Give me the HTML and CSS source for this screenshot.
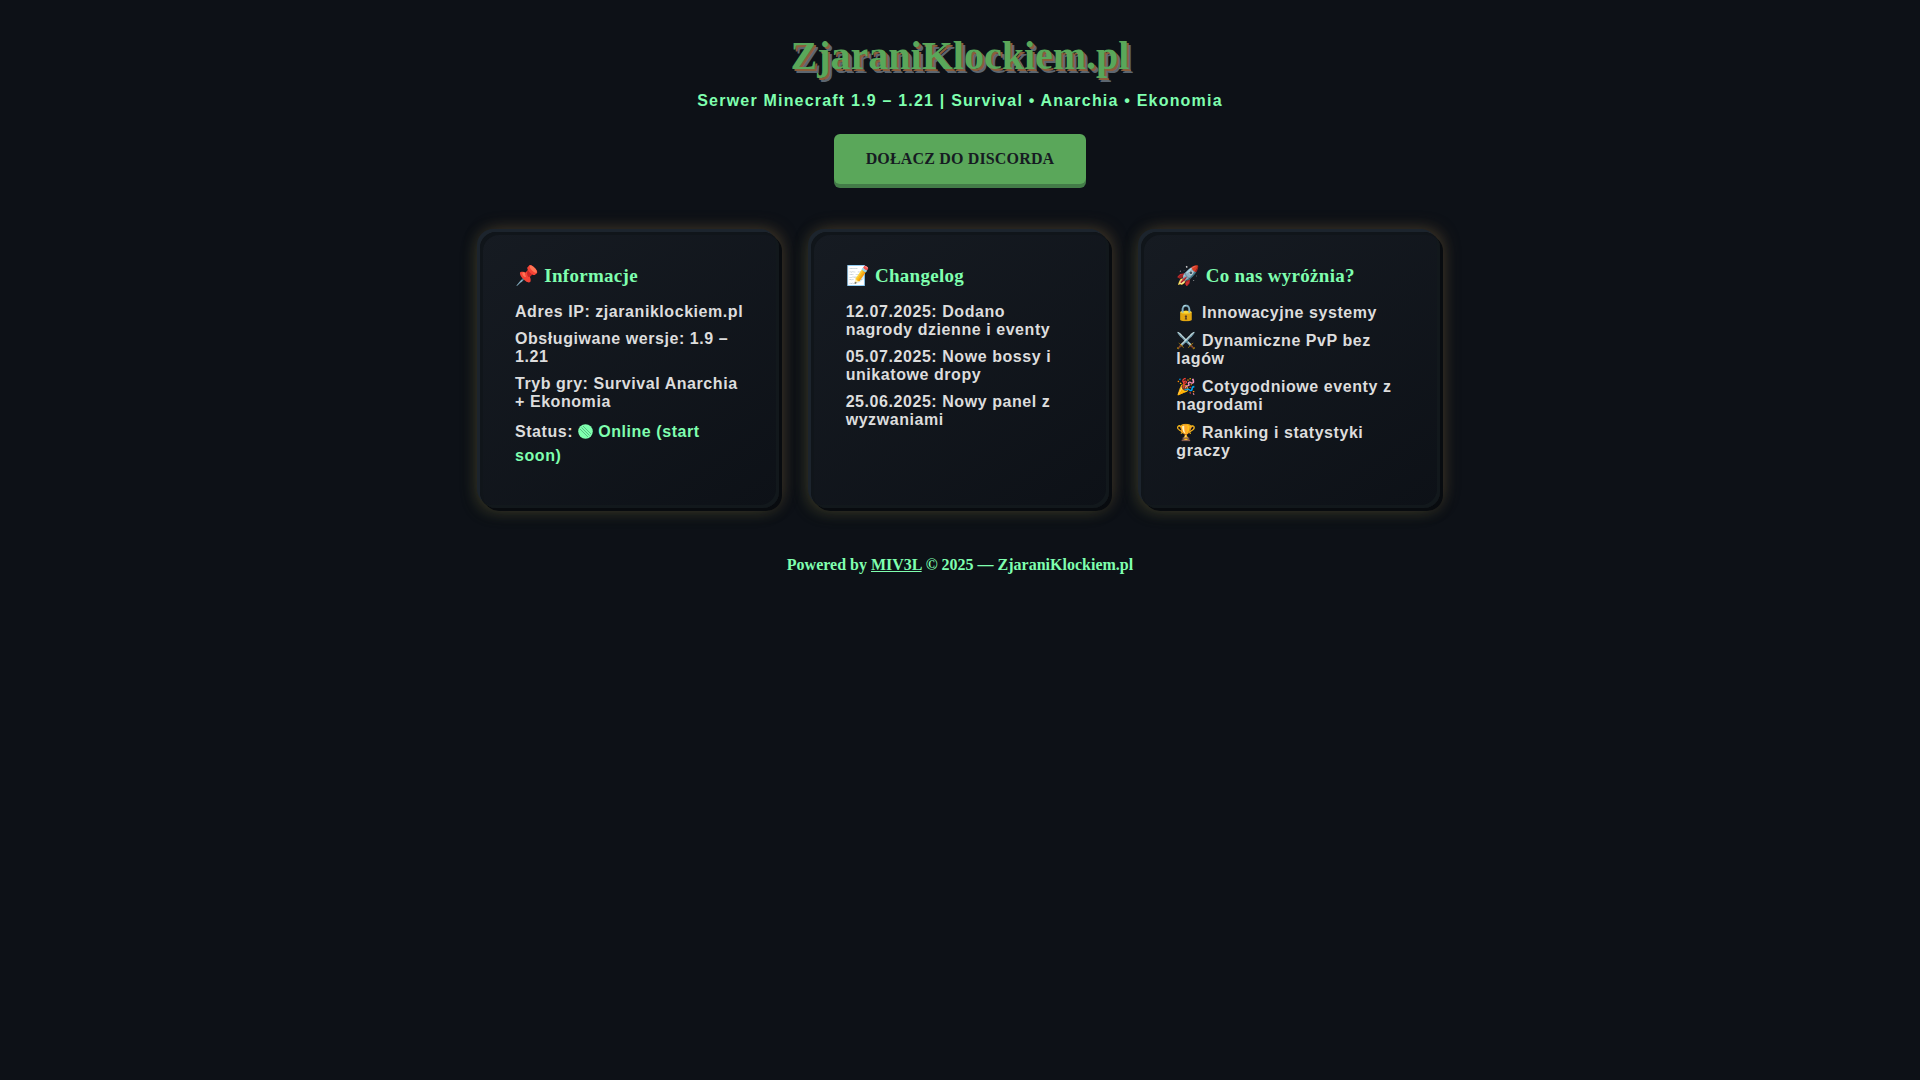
FILE: index.html
```html
<!DOCTYPE html>
<html lang="pl">
  <head>
    <meta charset="utf-8">
    <meta name="viewport" content="width=device-width, initial-scale=1">
    <title>ZjaraniKlockiem.pl</title>
    <link rel="stylesheet" href="styles.css">
  </head>
  <body>
    <header>
      <h1>ZjaraniKlockiem.pl</h1>
      <p class="subtitle">Serwer Minecraft 1.9 – 1.21 | Survival • Anarchia • Ekonomia</p>
      <a class="discord" href="#discord">DOŁACZ DO DISCORDA</a>
    </header>

    <main class="cards">
      <section class="card">
        <h2>📌 Informacje</h2>
        <p>Adres IP: zjaraniklockiem.pl</p>
        <p>Obsługiwane wersje: 1.9 – 1.21</p>
        <p>Tryb gry: Survival Anarchia + Ekonomia</p>
        <p class="status">Status:
          <span class="online"><svg class="dot" viewBox="0 0 15 15" aria-hidden="true">
            <circle cx="7.5" cy="7.5" r="7.3" fill="#7fffaf"/>
            <path d="M2 5L10 13M3.5 3.5L11.5 11.5M5 2L13 10" stroke="#4fae78" stroke-width=".8"/>
          </svg> Online (start soon)</span></p>
      </section>

      <section class="card">
        <h2>📝 Changelog</h2>
        <p>12.07.2025: Dodano nagrody dzienne i eventy</p>
        <p>05.07.2025: Nowe bossy i unikatowe dropy</p>
        <p>25.06.2025: Nowy panel z wyzwaniami</p>
      </section>

      <section class="card">
        <h2>🚀 Co nas wyróżnia?</h2>
        <p>🔒 Innowacyjne systemy</p>
        <p>⚔️ Dynamiczne PvP bez lagów</p>
        <p>🎉 Cotygodniowe eventy z nagrodami</p>
        <p>🏆 Ranking i statystyki graczy</p>
      </section>
    </main>

    <footer>
      Powered by <a href="#miv3l">MIV3L</a> © 2025 — ZjaraniKlockiem.pl
    </footer>
  </body>
</html>
```
FILE: styles.css
```css
* {
  box-sizing: border-box;
  margin: 0;
  padding: 0;
}
body {
  background-color: #0d1117;
  color: #dddddd;
  font-family: "Liberation Serif", serif;
  font-size: 16px;
  font-weight: bold;
  padding: 32px;
}
header {
  text-align: center;
}
h1 {
  color: #5aa75a;
  font-size: 40px;
  line-height: 48px;
  text-shadow: 2px 2px 0 #8b5e3c, 4px 4px 0 #5c6670;
}
.subtitle {
  color: #7fffaf;
  font-family: "Liberation Sans", sans-serif;
  letter-spacing: 0.075em;
  line-height: 18px;
  margin: 12px 0 24px;
}
.discord {
  background-color: #5aa75a;
  border-radius: 6px;
  box-shadow: 0 4px 0 #437c48;
  color: #161b22;
  display: inline-block;
  letter-spacing: 0.01em;
  line-height: 18px;
  padding: 16px 32px;
  text-decoration: none;
}
.cards {
  display: grid;
  gap: 32px;
  grid-template-columns: repeat(3, 1fr);
  margin: 48px auto;
  max-width: 960px;
}
.card {
  background: linear-gradient(145deg, #161b22, #0d1117);
  border-radius: 16px;
  box-shadow:
    inset 3px 3px 0 #10151a,
    inset -3px -3px 0 #12181c,
    -3px -3px 0 #1c242d,
    3px 3px 0 #080b0f,
    2px -2px 18px rgba(139, 94, 60, 0.4),
    -2px 2px 18px rgba(110, 130, 60, 0.3);
  padding: 32px 35px 31px;
}
h2 {
  color: #7fffaf;
  font-size: 19px;
  letter-spacing: 0.015em;
  line-height: 23px;
  margin-bottom: 16px;
}
.card p {
  font-family: "Liberation Sans", sans-serif;
  letter-spacing: 0.035em;
  margin-bottom: 9px;
}
.card .status {
  line-height: 24px;
}
.online {
  color: #7fffaf;
}
.dot {
  height: 15px;
  vertical-align: -2px;
  width: 15px;
}
footer {
  color: #7fffaf;
  text-align: center;
}
footer a {
  color: inherit;
}
```
